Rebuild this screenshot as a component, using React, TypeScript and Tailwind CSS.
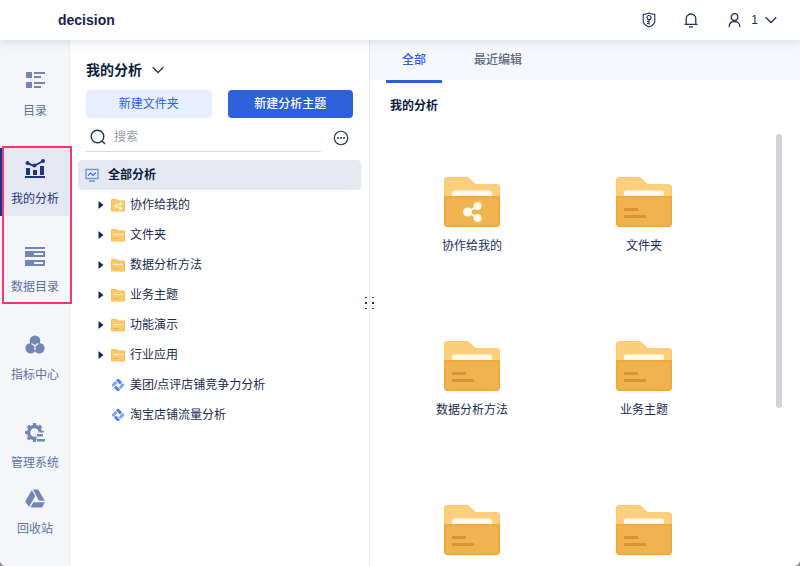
import { useState } from "react";
import type { ReactNode } from "react";

type NavItem = {
  label: string;
  icon: ReactNode;
};

type TreeItem = {
  label: string;
  kind: "share" | "folder" | "theme";
};

const TREE: TreeItem[] = [
  { label: "协作给我的", kind: "share" },
  { label: "文件夹", kind: "folder" },
  { label: "数据分析方法", kind: "folder" },
  { label: "业务主题", kind: "folder" },
  { label: "功能演示", kind: "folder" },
  { label: "行业应用", kind: "folder" },
  { label: "美团/点评店铺竞争力分析", kind: "theme" },
  { label: "淘宝店铺流量分析", kind: "theme" },
];

const TABS = ["全部", "最近编辑"];

const NAV: NavItem[] = [
  {
    label: "目录",
    icon: (
      <>
        <path d="M1 1h6v6H1zM1 11h6v6H1z" />
        <path d="M9 1h11v2H9zM9 5h7v2H9zM9 11h11v2H9zM9 15h7v2H9z" />
      </>
    ),
  },
  {
    label: "我的分析",
    icon: (
      <>
        <path d="M1 9h4v7H1zM8 11h4v5H8zM15 7h4v9h-4zM0 17h20v2H0z" />
        <path d="M2 4l7 3 9-5" fill="none" stroke="currentColor" strokeWidth="2" />
        <circle cx="2.5" cy="4" r="2" />
        <circle cx="9.5" cy="6.5" r="2" />
        <circle cx="18" cy="2" r="2" />
      </>
    ),
  },
  {
    label: "数据目录",
    icon: (
      <path
        fillRule="evenodd"
        d="M0 0h20v2H0zM0 4h20v6H0zM9 6v2h9V6zM0 13h20v6H0zM9 15v2h9v-2z"
      />
    ),
  },
  {
    label: "指标中心",
    icon: (
      <>
        <circle cx="10" cy="5.800" r="5.300" />
        <circle cx="5.700" cy="13.200" r="5.300" />
        <circle cx="14.300" cy="13.200" r="5.300" />
        <path d="M5 7h10l-2 9H7z" />
        <path d="M6.500 8.500L10 10.800l3.500-2.300M10 10.800V15" fill="none" stroke="#f4f6fa" strokeWidth="1.300" />
      </>
    ),
  },
  {
    label: "管理系统",
    icon: (
      <>
        <clipPath id="gear-cut">
          <path d="M0 0h20v9.500h-8.500V20H0z" />
        </clipPath>
        <g clipPath="url(#gear-cut)" fill="none" stroke="currentColor">
          <circle cx="9.500" cy="9.500" r="6" strokeWidth="3.400" />
          <circle
            cx="9.500"
            cy="9.500"
            r="8.300"
            strokeWidth="2.400"
            pathLength="48"
            strokeDasharray="3 3"
            strokeDashoffset="1.500"
          />
        </g>
        <path d="M12 11h6v2.500h-6zM12 16h8v2.500h-8z" />
      </>
    ),
  },
];

const RECYCLE: NavItem = {
  label: "回收站",
  icon: (
    <>
      <path d="M6.800 1L10.200 7 4 18 .2 12.500z" />
      <path d="M8 .5h5.200L19.800 11.800H14z" />
      <path d="M8.400 13.200H20L17 18.500H5.400z" />
    </>
  ),
};

function NavButton({ item, active, onClick }: { item: NavItem; active: boolean; onClick: () => void }) {
  return (
    <button
      type="button"
      onClick={onClick}
      className={`flex h-[68px] w-full shrink-0 flex-col items-center border-l-2 pr-px pt-[11px] text-xs ${
        active
          ? "border-[#1e3685] bg-[#e5e8f1] text-[#1e3685]"
          : "border-transparent text-[#5d70a5]"
      }`}
    >
      <svg
        width="20"
        height="20"
        viewBox="0 0 20 20"
        fill="currentColor"
        className={active ? "" : "text-[#7285b5]"}
      >
        {item.icon}
      </svg>
      <span className="mt-3 leading-4">{item.label}</span>
    </button>
  );
}

function Chevron() {
  return (
    <svg width="12" height="8" viewBox="0 0 12 8" fill="none" stroke="#20345c" strokeWidth="1.300">
      <path d="M.7 1.200L6 6.500l5.300-5.300" />
    </svg>
  );
}

function SmallFolder({ shared }: { shared: boolean }) {
  return (
    <svg width="14" height="14" viewBox="0 0 14 14" className="shrink-0">
      <path d="M.5 1.500h5l1.500 1.500h6.500v10H.5z" fill="#fdc969" stroke="#f6bd5c" />
      {shared ? (
        <>
          <path d="M9.500 5.500L5 8l4.500 2.300" fill="none" stroke="#fffaf0" strokeWidth="1" />
          <circle cx="4.800" cy="8" r="1.500" fill="#fffaf0" />
          <circle cx="9.600" cy="5.500" r="1.500" fill="#fffaf0" />
          <circle cx="9.600" cy="10.500" r="1.500" fill="#fffaf0" />
        </>
      ) : (
        <>
          <path d="M2 6.500h10" stroke="#fff0cf" strokeWidth="1" />
          <path d="M2 10.500h6" stroke="#eeb04a" strokeWidth="1" />
        </>
      )}
    </svg>
  );
}

function ThemeIcon() {
  return (
    <svg width="14" height="14" viewBox="0 0 14 14" className="shrink-0">
      <g transform="rotate(45 7 7)">
        <path d="M3.500 2.200H8v3H2.200V3.500q0-1.300 1.300-1.300z" fill="#4a7ff0" />
        <path d="M8.800 2.200h1.700q1.300 0 1.300 1.300V8h-3z" fill="#7ea4f5" />
        <path d="M6 8.800h5.800v1.700q0 1.300-1.300 1.300H6z" fill="#4a7ff0" />
        <path d="M2.200 6h3v5.800H3.500q-1.300 0-1.300-1.300z" fill="#7ea4f5" />
      </g>
    </svg>
  );
}

function BigFolder({ shared }: { shared: boolean }) {
  return (
    <svg width="56" height="52" viewBox="0 0 56 52">
      <rect x="8" y="48" width="40" height="4" rx="2" fill="#faf7f5" />
      <path
        d="M3 .5h19.500q1.500 0 2.500 1l5.500 5q1.200 1.200 3 1.200H53a2.500 2.500 0 0 1 2.500 2.500V25H.5V3A2.500 2.500 0 0 1 3 .5z"
        fill="#fccf7e"
        stroke="#fcc566"
      />
      <path d="M8 21v-5.500a2 2 0 0 1 2-2h36a2 2 0 0 1 2 2V21z" fill="#fff9e9" />
      <path d="M1 20h54v26.500a2.500 2.500 0 0 1-2.500 2.500h-49A2.500 2.500 0 0 1 1 46.500z" fill="#f1b350" stroke="#f0aa3c" strokeWidth="2" />
      {shared ? (
        <>
          <path d="M34 29L23.500 35 34 41" fill="none" stroke="#fffaeb" strokeWidth="2" />
          <circle cx="23.500" cy="35" r="4.500" fill="#fffaeb" />
          <circle cx="33.500" cy="29" r="4" fill="#fffaeb" />
          <circle cx="33.500" cy="41" r="4" fill="#fffaeb" />
        </>
      ) : (
        <path d="M8 31h14v3H8zM8 38h22v3H8z" fill="#d8942f" />
      )}
    </svg>
  );
}

export default function App() {
  const [nav, setNav] = useState("我的分析");
  const [tab, setTab] = useState("全部");
  const [query, setQuery] = useState("");

  const rows = TREE.filter((item) => item.label.includes(query));
  const folders = TREE.filter((item) => item.kind !== "theme");

  return (
    <div className="h-screen bg-[#8b8b8b] font-['Liberation_Sans','Noto_Sans_CJK_SC',sans-serif] text-xs text-[#1b2b50]">
      <div className="flex h-full flex-col overflow-hidden rounded-b-md bg-white">
        <header className="relative z-10 flex h-10 shrink-0 items-center bg-white pl-[58px] pr-[23px] shadow-[0_1px_10px_rgba(30,50,80,0.16)]">
          <h1 className="text-sm font-bold text-[#14254c]">decision</h1>
          <div className="ml-auto flex items-center">
            <button type="button" aria-label="权限" className="mr-7">
              <svg width="14" height="16" viewBox="0 0 14 16" fill="none" stroke="#20345c" strokeWidth="1.100">
                <path d="M7 1q2.500 1.400 5.800 1.400v6.600q0 3.800-5.800 6Q1.200 12.800 1.200 9V2.400Q4.500 2.400 7 1z" />
                <circle cx="7" cy="5.500" r="2" />
                <path d="M7 7.500v5M7 9.500H5M7 11.500H5" />
              </svg>
            </button>
            <button type="button" aria-label="消息" className="mr-[30px]">
              <svg width="14" height="16" viewBox="0 0 14 16" fill="none" stroke="#20345c" strokeWidth="1.300">
                <path d="M2.200 12V6.800a4.800 4.800 0 0 1 9.600 0V12M.5 12.300h13M5 14.800h4" />
              </svg>
            </button>
            <button type="button" className="flex items-center">
              <svg width="13" height="16" viewBox="0 0 13 16" fill="none" stroke="#20345c" strokeWidth="1.300">
                <circle cx="6.500" cy="5" r="3.300" />
                <path d="M1.200 15q0-5.500 5.300-5.500t5.300 5.500" />
              </svg>
              <span className="ml-[10px] mr-[7px]">1</span>
              <Chevron />
            </button>
          </div>
        </header>

        <div className="flex min-h-0 flex-1">
          <nav className="relative w-[70px] shrink-0 border-r border-[#e9ebf1] bg-[#f4f6fa] pt-5">
            <div className="flex flex-col gap-5">
              {NAV.map((item) => (
                <NavButton key={item.label} item={item} active={nav === item.label} onClick={() => setNav(item.label)} />
              ))}
            </div>
            <div className="-mt-[2px]">
              <NavButton item={RECYCLE} active={nav === RECYCLE.label} onClick={() => setNav(RECYCLE.label)} />
            </div>
            <div className="pointer-events-none absolute left-[2px] top-[106px] z-10 h-[158px] w-[70px] border-2 border-[#f7356f]" />
          </nav>

          <aside className="relative w-[300px] shrink-0 border-r border-[#e4e6ed] pt-5">
            <div className="px-4">
              <button type="button" className="flex h-5 items-center gap-[10px] text-sm font-bold text-[#0c1c3f]">
                我的分析
                <Chevron />
              </button>
              <div className="mt-[10px] flex gap-4">
                <button type="button" className="h-7 flex-1 rounded-sm bg-[#e6efff] text-[#2c60dd]">
                  新建文件夹
                </button>
                <button type="button" className="h-7 flex-1 rounded-sm bg-[#2c60dd] font-medium text-white">
                  新建分析主题
                </button>
              </div>
              <div className="flex items-center">
                <label className="flex h-[34px] flex-1 items-center gap-2 border-b border-[#d6d9e3] pl-1 pt-[5px]">
                  <svg width="16" height="16" viewBox="0 0 16 16" fill="none" stroke="#20345c" strokeWidth="1.400" className="shrink-0">
                    <circle cx="7.500" cy="7.500" r="6.300" />
                    <path d="M12 12l3 3" />
                  </svg>
                  <input
                    type="text"
                    aria-label="搜索"
                    placeholder="搜索"
                    value={query}
                    onChange={(e) => setQuery(e.target.value)}
                    className="w-full min-w-0 outline-none placeholder:text-[#979daa]"
                  />
                </label>
                <button type="button" aria-label="更多" className="ml-3 mr-1 mt-[6px]">
                  <svg width="16" height="16" viewBox="0 0 16 16" fill="none" stroke="#20345c" strokeWidth="1.100">
                    <circle cx="8" cy="8" r="6.700" />
                    <path d="M4 8h2M7 8h2M10 8h2" strokeWidth="1.500" />
                  </svg>
                </button>
              </div>
            </div>

            <div className="px-2 pt-2">
              <button
                type="button"
                className="flex h-[30px] w-full items-center gap-[9px] rounded-sm bg-[#e5e8f0] pl-[7px] font-bold text-[#0c1c3f]"
              >
                <svg width="14" height="14" viewBox="0 0 14 14" fill="none">
                  <path d="M1 1.500h12v9H1z" fill="#eaf0ff" stroke="#6f95ee" strokeWidth="1.400" />
                  <path d="M3 7.500l2.500-2.500 2.500 2.500L11 4.500" stroke="#3f6fe4" strokeWidth="1.200" />
                  <path d="M4 13h6" stroke="#5381e8" strokeWidth="1.300" />
                </svg>
                全部分析
              </button>
              <ul>
                {rows.map((item) => (
                  <li key={item.label}>
                    <button type="button" className="flex h-[30px] w-full items-center pl-5">
                      <span className="w-[13px] shrink-0">
                        {item.kind !== "theme" && (
                          <svg width="6" height="8" viewBox="0 0 6 8" fill="#14284f">
                            <path d="M.5 0L5.500 4 .5 8z" />
                          </svg>
                        )}
                      </span>
                      {item.kind === "theme" ? <ThemeIcon /> : <SmallFolder shared={item.kind === "share"} />}
                      <span className="ml-[5px]">{item.label}</span>
                    </button>
                  </li>
                ))}
              </ul>
            </div>

            {/* drag handle between the tree and the content */}
            <svg
              width="9"
              height="14"
              viewBox="0 0 9 14"
              fill="#26396c"
              className="absolute -right-[5px] top-1/2 z-10 -translate-y-1/2 cursor-col-resize"
            >
              <path d="M0 1h2v1H0zM7 1h2v1H7zM0 6h2v2H0zM7 6h2v2H7zM0 12h2v1H0zM7 12h2v1H7z" />
            </svg>
          </aside>

          <main className="relative flex min-w-0 flex-1 flex-col">
            <div role="tablist" className="flex h-10 shrink-0 gap-4 bg-[#f7f8fd] px-4">
              {TABS.map((name) => (
                <button
                  key={name}
                  type="button"
                  role="tab"
                  aria-selected={tab === name}
                  onClick={() => setTab(name)}
                  className={`h-[43px] border-b-[3px] px-4 font-medium ${
                    tab === name ? "border-[#2c60dd] text-[#2c60dd]" : "border-transparent text-[#5a6780]"
                  }`}
                >
                  {name}
                </button>
              ))}
            </div>
            <h2 className="shrink-0 px-5 pt-4 font-bold leading-5 text-[#0c1c3f]">我的分析</h2>
            <div className="mr-6 min-h-0 flex-1 overflow-hidden pl-4 pt-1">
              <ul className="grid grid-cols-[repeat(auto-fill,172px)]">
                {folders.map((item) => (
                  <li key={item.label} className="flex h-[164px] flex-col items-center pt-[57px]">
                    <BigFolder shared={item.kind === "share"} />
                    <span className="mt-[9px] leading-4">{item.label}</span>
                  </li>
                ))}
              </ul>
            </div>
            <div className="absolute right-[18px] top-[94px] h-[274px] w-[6px] rounded-sm bg-[#d0d3dd]" />
          </main>
        </div>
      </div>
    </div>
  );
}
